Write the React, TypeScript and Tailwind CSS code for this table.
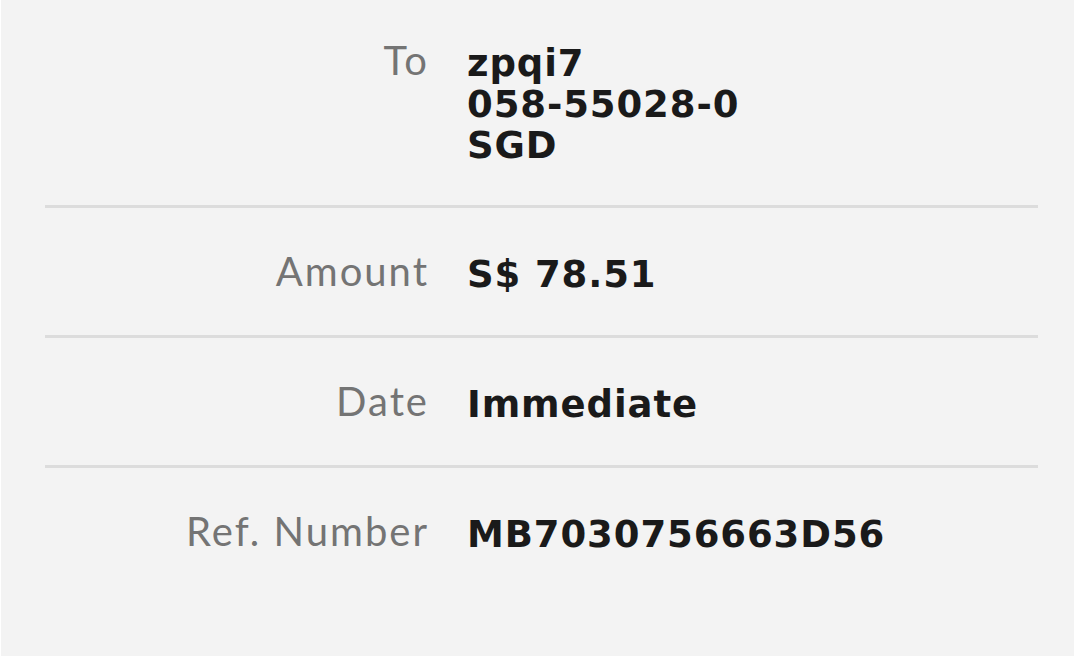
const rows = [
  { label: "To", value: ["zpqi7", "058-55028-0", "SGD"] },
  { label: "Amount", value: ["S$ 78.51"] },
  { label: "Date", value: ["Immediate"] },
  { label: "Ref. Number", value: ["MB7030756663D56"] },
]

export default function App() {
  return (
    <div className="min-h-[656px] bg-white pl-px">
      <div className="min-h-[656px] bg-[#f3f3f3] pl-[44px] pr-[36px]">
        {rows.map((row, i) => (
          <div
            key={row.label}
            className={`flex gap-[38px] ${i === 0 ? "pt-[40px] pb-[39px]" : "pt-[43px] pb-[40px]"} ${i < rows.length - 1 ? "border-b-[3px] border-[#dcdcdc]" : ""}`}
          >
            <div className="w-[384px] shrink-0 text-right font-['Lato',sans-serif] text-[40px] leading-[41px] tracking-[2px] text-[#747474]">
              {row.label}
            </div>
            <div className="pt-[3px] font-['DejaVu_Sans',sans-serif] text-[37px] leading-[41px] font-bold tracking-[0.9px] text-[#1a1a1a]">
              {row.value.map((v) => (
                <div key={v}>{v}</div>
              ))}
            </div>
          </div>
        ))}
      </div>
    </div>
  )
}
